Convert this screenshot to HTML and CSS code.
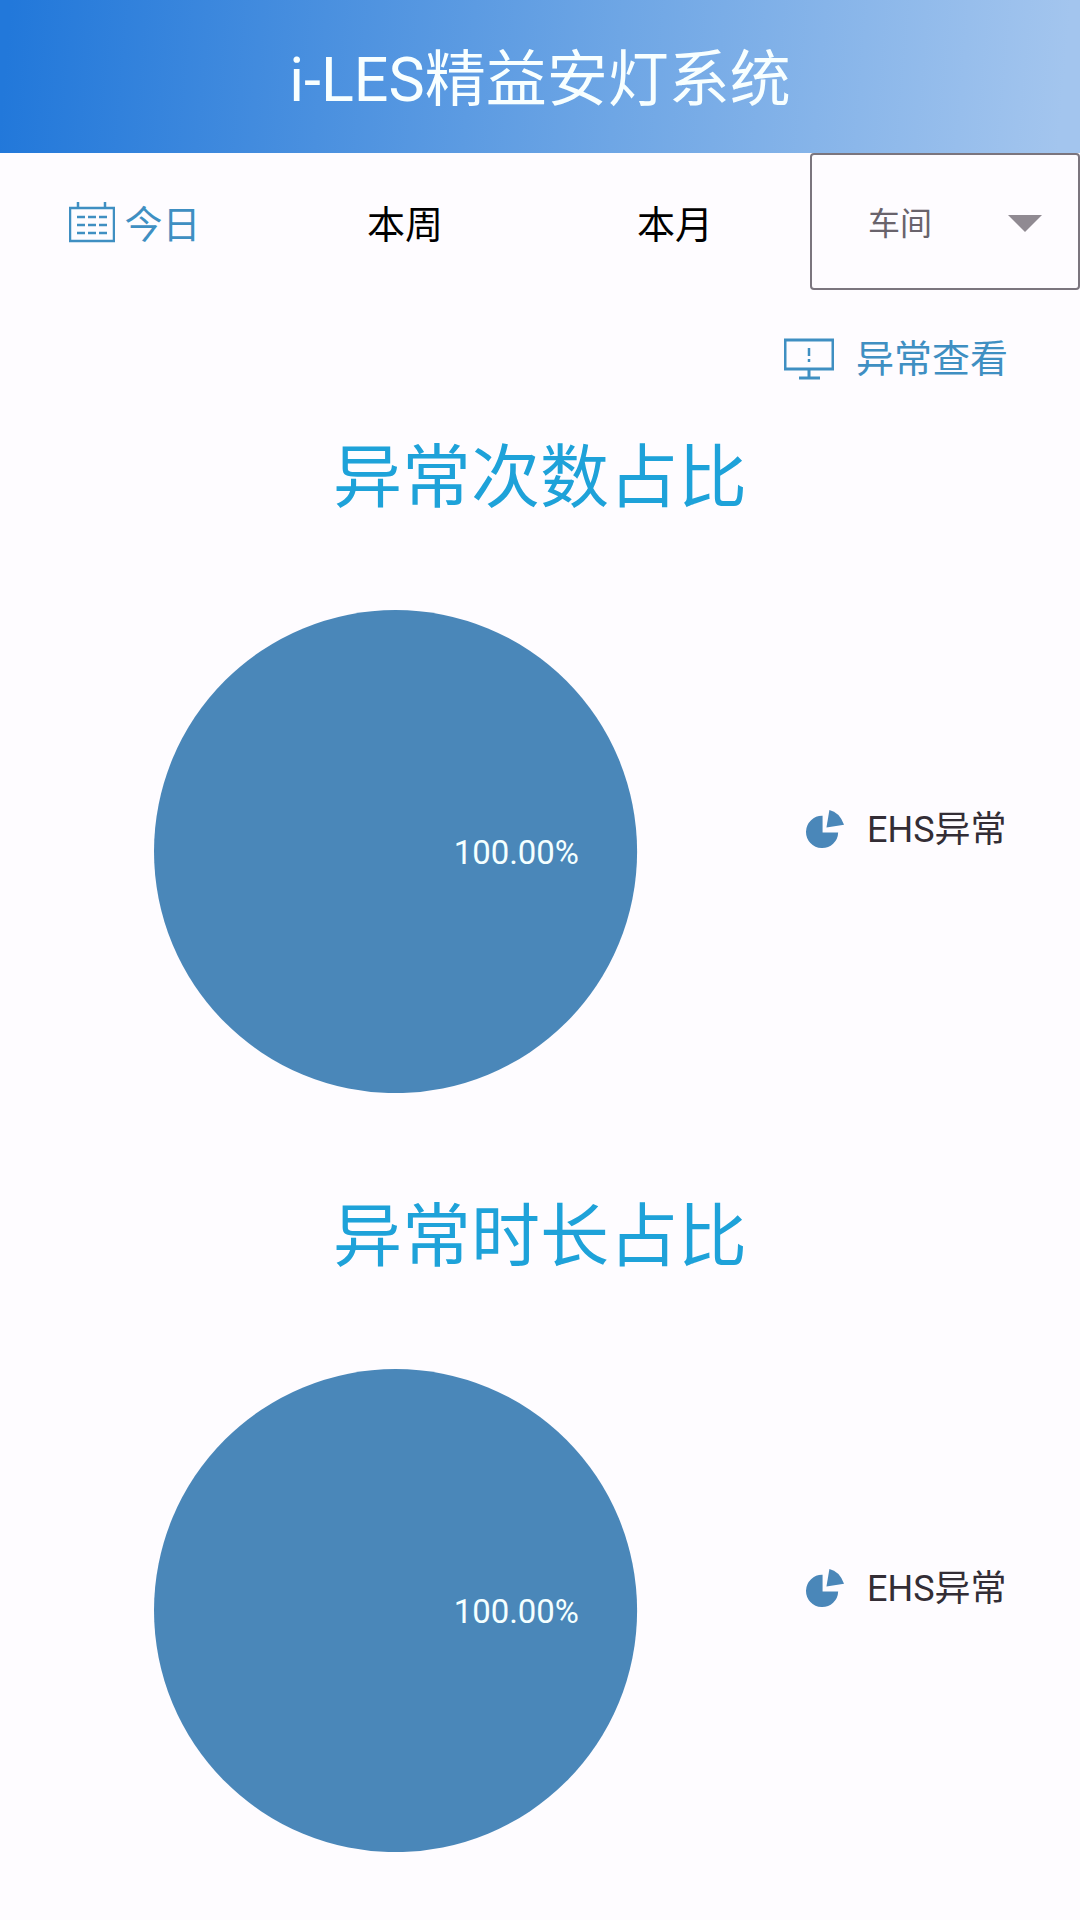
FILE: index.html
```html
<!DOCTYPE html>
<html lang="zh-CN">
<head>
<meta charset="utf-8">
<meta name="viewport" content="width=device-width, initial-scale=1">
<title>i-LES精益安灯系统</title>
<link rel="stylesheet" href="styles.css">
</head>
<body>
<header class="app-bar">
  <h1 class="app-title">i-LES精益安灯系统</h1>
</header>
<nav class="filters" aria-label="时间范围">
  <button class="tab tab-active" type="button">
    <svg class="icon-calendar" viewBox="0 0 46 42" aria-hidden="true">
      <path d="M1 7H45V40H1ZM9 1V7M36 1V7" fill="none" stroke="currentColor" stroke-width="2.500"/>
      <path d="M8 16H39M8 24H39M8 32H39" fill="none" stroke="currentColor" stroke-width="2.500" stroke-dasharray="8 3"/>
    </svg>
    今日
  </button>
  <button class="tab" type="button">本周</button>
  <button class="tab" type="button">本月</button>
  <div class="workshop">
    <select class="workshop-select" aria-label="车间">
      <option>车间</option>
    </select>
    <svg class="caret" viewBox="0 0 34 17" aria-hidden="true"><path d="M0 0H34L17 17Z" fill="currentColor"/></svg>
  </div>
</nav>
<main>
  <div class="actions">
    <a class="view-link" href="#">
      <svg class="icon-monitor" viewBox="0 0 50 42" aria-hidden="true">
        <path d="M1 2H49V31H1ZM25 31V40M15 40H36" fill="none" stroke="currentColor" stroke-width="3"/>
        <path d="M25 10V18M25 21V24" fill="none" stroke="currentColor" stroke-width="2.500"/>
      </svg>
      异常查看
    </a>
  </div>
  <section class="panel">
    <h2 class="panel-title">异常次数占比</h2>
    <div class="chart">
      <svg class="pie" viewBox="0 0 484 484" role="img" aria-label="EHS异常 100.00%">
        <circle cx="242" cy="242" r="242"/>
        <text x="363" y="254" text-anchor="middle">100.00%</text>
      </svg>
      <div class="legend">
        <svg class="icon-pie" viewBox="0 0 40 40" aria-hidden="true">
          <path d="M17 6A16.500 16.500 0 1 0 33 23H17Z" fill="currentColor"/>
          <path d="M21 18L24 0Q34 2 39 15Z" fill="currentColor"/>
        </svg>
        EHS异常
      </div>
    </div>
  </section>
  <section class="panel">
    <h2 class="panel-title">异常时长占比</h2>
    <div class="chart">
      <svg class="pie" viewBox="0 0 484 484" role="img" aria-label="EHS异常 100.00%">
        <circle cx="242" cy="242" r="242"/>
        <text x="363" y="254" text-anchor="middle">100.00%</text>
      </svg>
      <div class="legend">
        <svg class="icon-pie" viewBox="0 0 40 40" aria-hidden="true">
          <path d="M17 6A16.500 16.500 0 1 0 33 23H17Z" fill="currentColor"/>
          <path d="M21 18L24 0Q34 2 39 15Z" fill="currentColor"/>
        </svg>
        EHS异常
      </div>
    </div>
  </section>
</main>
</body>
</html>
```
FILE: styles.css
```css
* {
  box-sizing: border-box;
}

body {
  margin: 0;
  background: #fefcff;
  color: #332d35;
  font-family: Roboto, "Noto Sans CJK SC", sans-serif;
}

.app-bar {
  padding: 36px 16px 29px;
  background: linear-gradient(95deg, #2278da 1%, #4a90df 30%, #6ea6e5 57%, #a3c5ee 98%);
  text-align: center;
}

.app-title {
  margin: 0;
  color: #f8ffff;
  font-size: 61px;
  font-weight: 400;
  line-height: 88px;
}

.filters {
  display: grid;
  grid-template-columns: repeat(4, 1fr);
}

.tab {
  display: flex;
  align-items: center;
  justify-content: center;
  gap: 9px;
  padding: 0;
  border: 0;
  background: none;
  color: #000;
  font: inherit;
  font-size: 38px;
}

.tab-active {
  color: #3f8fc2;
}

.icon-calendar {
  width: 46px;
  height: 42px;
}

.workshop {
  display: grid;
  align-items: center;
}

.workshop-select,
.caret {
  grid-area: 1 / 1;
}

.workshop-select {
  width: 100%;
  height: 137px;
  padding: 4px 56px 0;
  appearance: none;
  border: 2px solid #7b757e;
  border-radius: 4px;
  background: transparent;
  color: #69636c;
  font: inherit;
  font-size: 32px;
}

.caret {
  justify-self: end;
  width: 34px;
  height: 17px;
  margin: 4px 38px 0 0;
  color: #908a92;
  pointer-events: none;
}

.actions {
  display: flex;
  justify-content: flex-end;
  padding: 41px 72px 52px;
}

.view-link {
  display: flex;
  align-items: center;
  gap: 22px;
  color: #3f8fc2;
  font-size: 38px;
  line-height: 56px;
  text-decoration: none;
}

.icon-monitor {
  width: 50px;
  height: 42px;
}

.panel {
  padding-bottom: 105px;
}

.panel:last-child {
  padding-bottom: 64px;
}

.panel-title {
  margin: 0 0 91px;
  color: #1ea2d9;
  font-size: 69px;
  font-weight: 400;
  line-height: 80px;
  text-align: center;
}

.chart {
  display: grid;
  grid-template-columns: 11fr 4fr;
  align-items: center;
}

.pie {
  justify-self: center;
  width: 61%;
  fill: #4a87b9;
}

.pie text {
  fill: #f4ffff;
  font-size: 33px;
}

.legend {
  display: flex;
  align-items: center;
  gap: 22px;
  padding: 0 0 44px 14px;
  font-size: 36px;
  line-height: 48px;
}

.icon-pie {
  width: 39px;
  height: 39px;
  color: #4a87b9;
}
```
